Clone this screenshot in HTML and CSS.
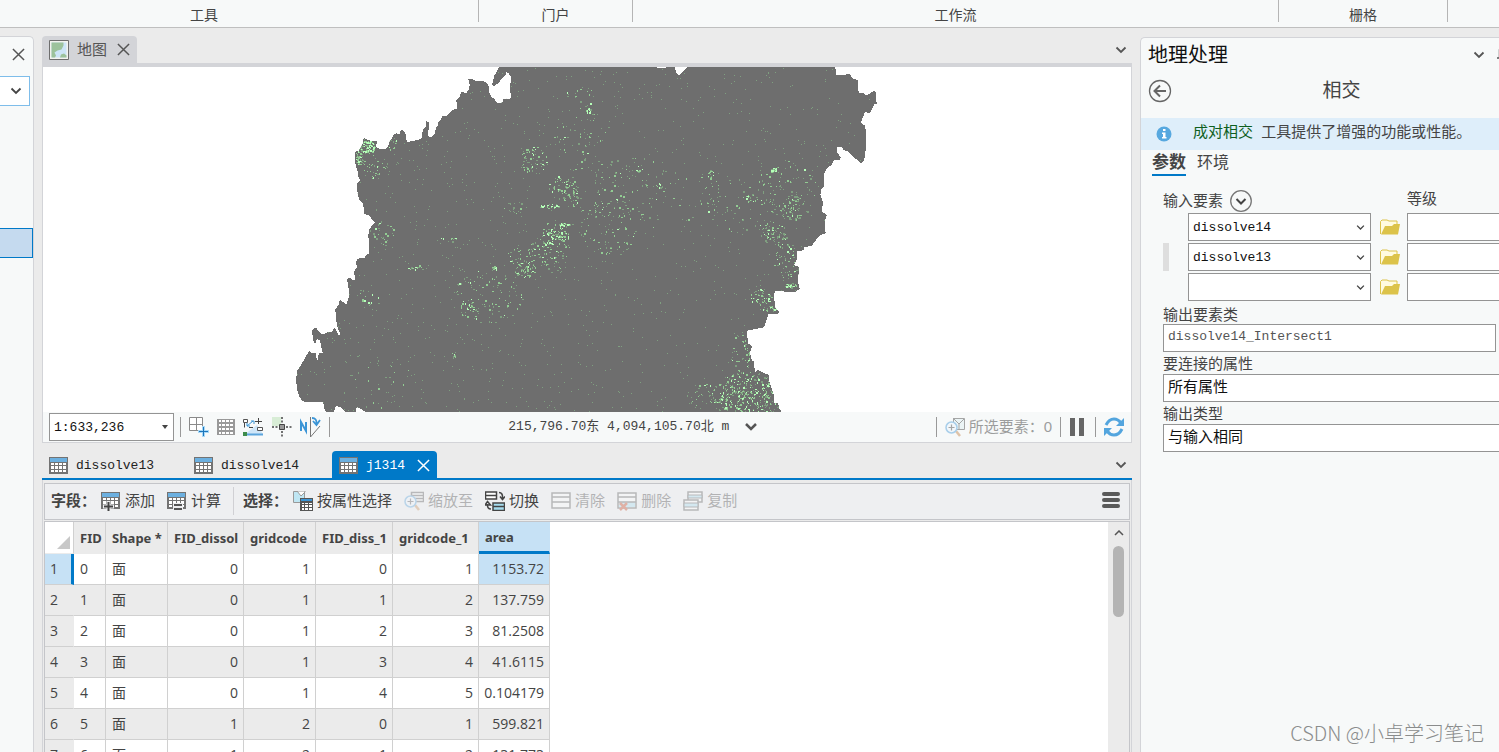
FILE: index.html
```
<!DOCTYPE html>
<html lang="zh-CN">

<head>
    <meta charset="UTF-8">
    <meta name="viewport" content="width=device-width, initial-scale=1.0">
    <title>地图</title>
    <link rel="stylesheet" href="styles.css">
</head>

<body>
    <!-- shared icons -->
    <svg class="sprite" aria-hidden="true">
        <symbol id="close" viewBox="0 0 14 14">
            <path d="M1 1l12 12M13 1L1 13" fill="none" stroke="currentColor" stroke-width="1.6" />
        </symbol>
        <symbol id="chevron" viewBox="0 0 12 12">
            <path d="M1.500 3.500L6 8l4.500-4.500" fill="none" stroke="currentColor" stroke-width="1.8" />
        </symbol>
        <symbol id="grid" viewBox="0 0 19 17">
            <path d="M0 0h19v17H0z" fill="#737373" />
            <path d="M1 1h17v4H1z" fill="#6cb0e0" />
            <path d="M2 6h3v2H2zM6 6h3v2H6zM10 6h3v2h-3zM14 6h3v2h-3zM2 9h3v3H2zM6 9h3v3H6zM10 9h3v3h-3zM14 9h3v3h-3zM2 13h3v2H2zM6 13h3v2H6zM10 13h3v2h-3zM14 13h3v2h-3z" fill="#fff" />
        </symbol>
        <symbol id="folder" viewBox="0 0 20 16">
            <path d="M.5 15V2.500L2 1h5l2 1h8v4" fill="#fffbe0" stroke="#dcc34a" />
            <path d="M1 15.500L5 7h7l2-2h6l-2 10.500z" fill="#dcc34a" />
        </symbol>
        <symbol id="magnifier" viewBox="0 0 20 20">
            <path d="M11 14l4 5" stroke="#c98f5a" stroke-width="2.500" />
            <circle cx="6.500" cy="10.500" r="5.500" fill="#eef6fd" stroke="#5ba5dc" stroke-width="1.500" />
            <path d="M3.500 10.500h6M6.500 7.500v6" stroke="#555" stroke-width="1.200" />
        </symbol>
    </svg>

    <header class="ribbon">
        <div class="group">工具</div>
        <div class="group">门户</div>
        <div class="group">工作流</div>
        <div class="group">栅格</div>
        <div class="group"></div>
    </header>

    <div class="workspace">
        <aside class="contents">
            <div class="contents-title">
                <button type="button" class="plain" aria-label="关闭"><svg width="13" height="13"><use href="#close" /></svg></button>
            </div>
            <button type="button" class="search-drop" aria-label="搜索选项"><svg width="12" height="12"><use href="#chevron" /></svg></button>
            <div class="layer-selected"></div>
        </aside>

        <main class="center">
            <div class="tabs map-tabs">
                <button type="button" class="tab current">
                    <svg width="20" height="20" viewBox="0 0 20 20">
                        <path d="M.5.500h19v19H.5z" fill="#f3f3ee" stroke="#6e6e6e" />
                        <path d="M2.500 2.500h15v15h-15z" fill="#cde5f7" />
                        <path d="M2.500 2.500h12v3l-2 4-4 1-3 2 1.500 3-1 2h-3.500zM17.500 17.500H11l1-3 3-1 2.500 2z" fill="#9cc29b" />
                    </svg>
                    <span>地图</span>
                    <svg width="13" height="13"><use href="#close" /></svg>
                </button>
                <button type="button" class="plain more" aria-label="更多视图"><svg width="12" height="12"><use href="#chevron" /></svg></button>
            </div>

            <section class="map-view">
                <!-- three units to a pixel -->
                <svg class="map" viewBox="129 201 3264 1035" preserveAspectRatio="xMidYMid slice" shape-rendering="crispEdges">
                    <defs>
                        <path id="west" transform="translate(870 180)" d="M628 20L620 35 612 48 609 66 605 72 609 79 620 73 628 66 636 55 646 46 650 36 656 40 662 50 663 65 659 80 661 95 663 112 657 117 640 116 638 126 630 130 618 127 612 115 606 112 601 104 597 95 596 80 590 68 580 63 555 62 548 57 534 56 538 66 539 76 536 88 529 101 518 96 512 98 511 108 501 118 498 122 502 135 500 146 488 150 478 159 470 167 458 168 452 181 445 185 444 198 437 205 435 222 425 230 417 232 413 222 417 205 416 185 408 184 407 200 400 207 396 222 394 237 380 240 368 243 350 246 349 230 344 215 336 210 329 213 329 222 318 220 310 224 306 235 298 246 293 262 285 267 268 266 259 262 260 244 248 243 234 240 224 235 218 240 219 250 212 262 206 272 196 275 194 290 197 315 203 335 206 355 212 361 200 373 202 395 207 417 219 430 223 461 238 467 246 478 254 488 243 500 236 512 235 530 238 555 237 580 227 585 225 594 202 596 199 605 200 622 192 635 196 658 188 660 180 653 171 658 175 675 177 710 173 722 170 733 160 727 150 719 146 733 136 748 138 775 141 795 146 810 152 825 146 827 138 808 132 804 126 815 112 817 96 824 89 818 80 805 72 804 67 812 68 838 75 852 81 838 88 840 94 857 95 870 98 878 86 880 84 901 80 900 78 880 64 878 57 872 52 882 42 900 22 932 18 960 22 990 28 1010 38 1024 60 1027 100 1026 101 1040 108 1056 132 1056 138 1038 150 1041 165 1056 198 1056 200 1041 212 1047 228 1056H990V20z" />
                        <path id="east" transform="translate(1800 180)" d="M0 20H170V23H198V20H225L228 38 238 46 250 32 262 22 270 20H706L708 44 725 44 750 43 757 55 773 60 776 97 790 100 800 106 808 102 822 92 828 96 827 115 831 130 822 134 815 150 808 161 795 154 790 168 783 188 796 198 798 235 799 250 795 290 790 305 782 311 770 298 758 290 745 275 730 270 726 260 712 260 712 278 722 292 720 299 700 302 695 315 680 325 672 342 672 380 664 388 661 405 668 425 667 455 680 465 674 485 677 520 660 525 648 540 635 557 613 562 610 571 592 573 592 595 582 615 596 620 595 670 599 687 585 696 560 697 545 692 525 692 522 705 525 742 538 757 530 763 505 762 500 780 492 802 442 812 443 850 456 858 450 880 455 900 463 905 464 937 473 930 488 937 507 945 508 965 515 985 522 1005 523 1030 534 1030 538 1045 545 1056H0z" />
                        <clipPath id="land">
                            <use href="#west" />
                            <use href="#east" />
                        </clipPath>
                    </defs>
                    <g fill="#6e6e6e">
                        <use href="#west" />
                        <use href="#east" />
                    </g>
                    <g clip-path="url(#land)">
                        <path id="patches-dim" fill="#7f9f80" />
                        <path id="patches-mid" fill="#92cc93" />
                        <path id="patches-bright" fill="#b5ffb8" />
                    </g>
                </svg>

                <div class="status">
                    <div class="status-part">
                        <label class="drop scale">
                            <select aria-label="比例尺">
                                <option>1:633,236</option>
                            </select>
                            <svg width="6" height="4" viewBox="0 0 6 4"><path d="M0 0h6L3 4z" fill="#444" /></svg>
                        </label>
                        <i class="sep"></i>
                        <button type="button" class="plain" aria-label="约束">
                            <svg width="20" height="20" viewBox="0 0 20 20">
                                <path d="M.5.500h13v13H.5zM7.500.500v13M.5 7.500h13" fill="#fff" stroke="#8a8a8a" />
                                <path d="M14.500 9v11M9 14.500h11" stroke="#a9d9f7" stroke-width="3" />
                                <path d="M14.500 10v9M10 14.500h9" stroke="#1b75bb" />
                            </svg>
                        </button>
                        <button type="button" class="plain" aria-label="格网">
                            <svg width="18" height="16" viewBox="0 0 18 16">
                                <path d="M0 0h18v16H0z" fill="#999" />
                                <path d="M2 1h2v2H2zM5 1h3v2H5zM9 1h3v2H9zM13 1h3v2h-3zM2 5h2v2H2zM5 5h3v2H5zM9 5h3v2H9zM13 5h3v2h-3zM2 9h2v2H2zM5 9h3v2H5zM9 9h3v2H9zM13 9h3v2h-3zM2 13h2v2H2zM5 13h3v2H5zM9 13h3v2H9zM13 13h3v2h-3z" fill="#fff" />
                            </svg>
                        </button>
                        <button type="button" class="plain" aria-label="捕捉">
                            <svg width="21" height="18" viewBox="0 0 21 18">
                                <path d="M2 16L14 7l6 9z" fill="#cfe6f8" />
                                <path d="M3 16.500h17" stroke="#5ba5dc" stroke-width="2" />
                                <path d="M1.500 5v4.500M6 9.500h4M12 3.500h7M15.500 0v6" fill="none" stroke="#444" />
                                <path d="M4 8l6-5M4 5v3h3M8 3h3v3" fill="none" stroke="#3b95d6" />
                                <path d="M.5 1.500h4v3h-4zM14.500 9.500h5v3h-5z" fill="#fff" stroke="#555" />
                                <path d="M0 14h4v4H0z" fill="#3f8d4b" />
                            </svg>
                        </button>
                        <button type="button" class="plain" aria-label="推断">
                            <svg width="20" height="20" viewBox="0 0 20 20">
                                <path d="M0 0h9v9H0z" fill="#d8edd6" />
                                <path d="M10 0v20M0 10h20" stroke="#444" stroke-width="1.500" stroke-dasharray="2 1.500" />
                                <path d="M7.500 7.500h5v5h-5z" fill="#999" stroke="#444" />
                            </svg>
                        </button>
                        <button type="button" class="plain" aria-label="旋转">
                            <svg width="21" height="20" viewBox="0 0 21 20">
                                <path d="M1 14V5l5 9V5" fill="none" stroke="#3b95d6" stroke-width="2" />
                                <path d="M10.500 0v20L20 9" fill="none" stroke="#777" />
                                <path d="M12 1q5 0 4.500 6M13 4l3.500 4L20 3" fill="none" stroke="#3b95d6" stroke-width="1.800" />
                            </svg>
                        </button>
                        <i class="sep"></i>
                    </div>
                    <div class="status-part coords">
                        <span>215,796.70东 4,094,105.70北 m</span>
                        <button type="button" class="plain" aria-label="坐标单位">
                            <svg width="12" height="8" viewBox="0 0 12 8"><path d="M1 1l5 5 5-5" fill="none" stroke="#555" stroke-width="2.500" /></svg>
                        </button>
                    </div>
                    <div class="status-part">
                        <i class="sep"></i>
                        <button type="button" class="plain picked" disabled>
                            <svg width="20" height="20" viewBox="0 0 20 20">
                                <path d="M8.500 1.500h11v11h-11z" fill="#e1f1f3" stroke="#555" />
                                <path d="M8 1l6 6 5-5M14 7v5" fill="none" stroke="#555" />
                                <use href="#magnifier" />
                            </svg>
                            <span>所选要素：0</span>
                        </button>
                        <i class="sep"></i>
                        <button type="button" class="plain" aria-label="暂停">
                            <svg width="18" height="18" viewBox="0 0 18 18"><path d="M1 0h5v18H1zM10 0h5v18h-5z" fill="#666" /></svg>
                        </button>
                        <i class="sep"></i>
                        <button type="button" class="plain" aria-label="刷新">
                            <svg width="20" height="20" viewBox="0 0 20 20">
                                <path d="M2 8q3-6 8-6 4 0 7 4M18 12q-3 6-8 6-4 0-7-4" fill="none" stroke="#53a5de" stroke-width="3" />
                                <path d="M20 1v8h-8zM0 19v-8h8z" fill="#53a5de" />
                            </svg>
                        </button>
                    </div>
                </div>
            </section>

            <div class="tabs table-tabs">
                <button type="button" class="tab"><svg width="19" height="17"><use href="#grid" /></svg><span>dissolve13</span></button>
                <button type="button" class="tab"><svg width="19" height="17"><use href="#grid" /></svg><span>dissolve14</span></button>
                <button type="button" class="tab current"><svg width="19" height="17"><use href="#grid" /></svg><span>j1314</span><svg width="13" height="13"><use href="#close" /></svg></button>
                <button type="button" class="plain more" aria-label="更多表"><svg width="12" height="12"><use href="#chevron" /></svg></button>
            </div>

            <section class="table-pane">
                <div class="toolbar">
                    <b>字段：</b>
                    <button type="button" class="tool">
                        <svg width="20" height="20" viewBox="0 0 20 20">
                            <use href="#grid" width="19" height="17" y="1" />
                            <path d="M7.500 10v10M2 15.500h11" stroke="#eeeff1" stroke-width="4" />
                            <path d="M7.500 11v9M3 15.500h9" stroke="#444" stroke-width="2" />
                        </svg>
                        <span>添加</span>
                    </button>
                    <button type="button" class="tool">
                        <svg width="20" height="20" viewBox="0 0 20 20">
                            <use href="#grid" width="19" height="17" y="1" />
                            <path d="M6 12h10v8H6z" fill="#eeeff1" />
                            <path d="M7 14h8M7 18h8" stroke="#555" stroke-width="2" />
                        </svg>
                        <span>计算</span>
                    </button>
                    <i class="sep"></i>
                    <b>选择：</b>
                    <button type="button" class="tool">
                        <svg width="20" height="20" viewBox="0 0 20 20">
                            <path d="M.5.500h11v11H.5z" fill="#bfe6f3" stroke="#999" />
                            <path d="M4 0l4 5 4-4V0z" fill="#fff" stroke="#999" />
                            <path d="M7 7h13v13H7z" fill="#555" />
                            <path d="M8 8h11v2H8z" fill="#3b95d6" />
                            <path d="M9 12h2v1H9zM12 12h3v1h-3zM16 12h3v1h-3zM9 14h2v2H9zM12 14h3v2h-3zM16 14h3v2h-3zM9 17h2v2H9zM12 17h3v2h-3zM16 17h3v2h-3z" fill="#fff" />
                        </svg>
                        <span>按属性选择</span>
                    </button>
                    <button type="button" class="tool" disabled>
                        <svg width="20" height="20" viewBox="0 0 20 20">
                            <path d="M7.500 1.500h12v9h-12zM8 4.500h12M8 7.500h12" fill="#fff" stroke="#555" stroke-width="1.500" />
                            <use href="#magnifier" />
                        </svg>
                        <span>缩放至</span>
                    </button>
                    <button type="button" class="tool">
                        <svg width="20" height="20" viewBox="0 0 20 20">
                            <path d="M.5 1h11v7H.5zM0 4.500h12" fill="#fff" stroke="#444" stroke-width="1.500" />
                            <path d="M8 12h11.500v7.500H8zM8 15.500h12" fill="#a6dcef" stroke="#444" stroke-width="1.500" />
                            <path d="M14 1.500q4 0 3.500 6M15 5.500l2.500 3 2.500-3M6 18q-4 0-3.500-5M0 14l2.500-3.500L5.500 14z" fill="none" stroke="#444" stroke-width="1.500" />
                        </svg>
                        <span>切换</span>
                    </button>
                    <button type="button" class="tool" disabled>
                        <svg width="20" height="20" viewBox="0 0 20 20">
                            <path d="M1 2h18v15H1zM1 6h18M1 11h18" fill="#fff" stroke="#555" stroke-width="1.500" />
                        </svg>
                        <span>清除</span>
                    </button>
                    <button type="button" class="tool" disabled>
                        <svg width="20" height="20" viewBox="0 0 20 20">
                            <path d="M1 2h18v15H1z" fill="#fff" stroke="#555" stroke-width="1.500" />
                            <path d="M2 11h16v5H2z" fill="#a6dcef" />
                            <path d="M1 6h18M1 11h18" stroke="#555" stroke-width="1.500" />
                            <path d="M3 12l7 7M10 12l-7 7" stroke="#c5401d" stroke-width="2.500" />
                        </svg>
                        <span>删除</span>
                    </button>
                    <button type="button" class="tool" disabled>
                        <svg width="20" height="20" viewBox="0 0 20 20">
                            <path d="M5 1h14v10H5z" fill="#fff" stroke="#555" stroke-width="1.500" />
                            <path d="M5 4h14v3H5z" fill="#a6dcef" stroke="#555" />
                            <path d="M1 9h14v10H1z" fill="#fff" stroke="#555" stroke-width="1.500" />
                            <path d="M1 12h14v4H1z" fill="#a6dcef" stroke="#555" />
                        </svg>
                        <span>复制</span>
                    </button>
                    <button type="button" class="plain menu" aria-label="菜单">
                        <svg width="18" height="17" viewBox="0 0 18 17"><path d="M2 2h14M2 8h14M2 14h14" stroke="#5a5a5a" stroke-width="4" stroke-linecap="round" /></svg>
                    </button>
                </div>

                <div class="table-box">
                    <div class="table-scroll">
                        <table>
                            <colgroup>
                                <col class="c-row">
                                <col class="c-fid">
                                <col class="c-shape">
                                <col class="c-dissol">
                                <col class="c-grid">
                                <col class="c-diss1">
                                <col class="c-grid1">
                                <col class="c-area">
                            </colgroup>
                            <thead>
                                <tr>
                                    <th class="corner"><svg width="13" height="13" viewBox="0 0 13 13"><path d="M13 0v13H0z" fill="#c8c8c8" /></svg></th>
                                    <th>FID</th>
                                    <th>Shape *</th>
                                    <th>FID_dissol</th>
                                    <th>gridcode</th>
                                    <th>FID_diss_1</th>
                                    <th>gridcode_1</th>
                                    <th class="sorted">area</th>
                                </tr>
                            </thead>
                            <tbody>
                                <tr class="active"><th>1</th><td>0</td><td>面</td><td>0</td><td>1</td><td>0</td><td>1</td><td>1153.72</td></tr>
                                <tr><th>2</th><td>1</td><td>面</td><td>0</td><td>1</td><td>1</td><td>2</td><td>137.759</td></tr>
                                <tr><th>3</th><td>2</td><td>面</td><td>0</td><td>1</td><td>2</td><td>3</td><td>81.2508</td></tr>
                                <tr><th>4</th><td>3</td><td>面</td><td>0</td><td>1</td><td>3</td><td>4</td><td>41.6115</td></tr>
                                <tr><th>5</th><td>4</td><td>面</td><td>0</td><td>1</td><td>4</td><td>5</td><td>0.104179</td></tr>
                                <tr><th>6</th><td>5</td><td>面</td><td>1</td><td>2</td><td>0</td><td>1</td><td>599.821</td></tr>
                                <tr><th>7</th><td>6</td><td>面</td><td>1</td><td>2</td><td>1</td><td>2</td><td>131.773</td></tr>
                            </tbody>
                        </table>
                    </div>
                    <div class="scrollbar">
                        <svg width="10" height="6" viewBox="0 0 10 6"><path d="M1 5l4-4 4 4" fill="none" stroke="#555" stroke-width="1.500" /></svg>
                        <div class="thumb"></div>
                    </div>
                </div>
            </section>
        </main>

        <aside class="geo">
            <div class="geo-title">
                <h2>地理处理</h2>
                <button type="button" class="plain" aria-label="窗格选项"><svg width="12" height="12"><use href="#chevron" /></svg></button>
                <button type="button" class="plain pin" aria-label="固定"><svg width="12" height="12" viewBox="0 0 12 12"><path d="M0 9h11M2.500 9V1h6v8M5.500 9v3" fill="none" stroke="#555" stroke-width="1.500" /></svg></button>
            </div>
            <div class="geo-tool">
                <button type="button" class="plain" aria-label="返回">
                    <svg width="24" height="24" viewBox="0 0 24 24">
                        <circle cx="12" cy="12" r="10.500" fill="none" stroke="#666" stroke-width="1.300" />
                        <path d="M18 12H7M12 6.500L6.500 12l5.500 5.500" fill="none" stroke="#666" stroke-width="2" />
                    </svg>
                </button>
                <h3>相交</h3>
            </div>
            <div class="notice">
                <svg width="16" height="16" viewBox="0 0 16 16">
                    <circle cx="8" cy="8" r="7.500" fill="#57a8df" />
                    <path d="M7 3h2.500v2H7zM6 6.500h3.500V11h1v1.500H6V11h1V8H6z" fill="#fff" />
                </svg>
                <p><a href="#pairwise">成对相交</a> 工具提供了增强的功能或性能。</p>
            </div>
            <nav class="geo-tabs">
                <a href="#params" class="current">参数</a>
                <a href="#env">环境</a>
            </nav>

            <form class="params">
                <div class="inputs-head">
                    <span>输入要素</span>
                    <button type="button" class="plain" aria-label="添加多个">
                        <svg width="22" height="22" viewBox="0 0 22 22">
                            <circle cx="11" cy="11" r="10.300" fill="none" stroke="#777" stroke-width="1.300" />
                            <path d="M6.500 9l4.500 4.500L15.500 9" fill="none" stroke="#444" stroke-width="2" />
                        </svg>
                    </button>
                    <span class="rank">等级</span>
                </div>
                <div class="input-row">
                    <i class="grip"></i>
                    <label class="drop"><select aria-label="输入要素 1"><option>dissolve14</option></select><svg width="9" height="9"><use href="#chevron" /></svg></label>
                    <button type="button" class="plain" aria-label="浏览"><svg width="20" height="16"><use href="#folder" /></svg></button>
                    <input type="text" aria-label="等级 1">
                </div>
                <div class="input-row">
                    <i class="grip shown"></i>
                    <label class="drop"><select aria-label="输入要素 2"><option>dissolve13</option></select><svg width="9" height="9"><use href="#chevron" /></svg></label>
                    <button type="button" class="plain" aria-label="浏览"><svg width="20" height="16"><use href="#folder" /></svg></button>
                    <input type="text" aria-label="等级 2">
                </div>
                <div class="input-row">
                    <i class="grip"></i>
                    <label class="drop"><select aria-label="输入要素 3"><option></option></select><svg width="9" height="9"><use href="#chevron" /></svg></label>
                    <button type="button" class="plain" aria-label="浏览"><svg width="20" height="16"><use href="#folder" /></svg></button>
                    <input type="text" aria-label="等级 3">
                </div>
                <label class="caption" for="out-class">输出要素类</label>
                <input type="text" id="out-class" value="dissolve14_Intersect1">
                <label class="caption" for="join-attr">要连接的属性</label>
                <select id="join-attr" class="wide"><option>所有属性</option></select>
                <label class="caption" for="out-type">输出类型</label>
                <select id="out-type" class="wide"><option>与输入相同</option></select>
            </form>
        </aside>
    </div>

    <div class="watermark">CSDN @小卓学习笔记</div>

    <script src="map.js"></script>
</body>

</html>
```
FILE: styles.css
```
* {
    box-sizing: border-box;
}

body {
    margin: 0;
    height: 100vh;
    display: flex;
    flex-direction: column;
    overflow: hidden;
    background: #ebebeb;
    color: #444;
    font-family: "Liberation Sans", "Noto Sans CJK SC", sans-serif;
    font-size: 15px;
    line-height: 20px;
}

h2, h3, p {
    margin: 0;
    font-weight: normal;
}

button, input, select {
    font: inherit;
    color: inherit;
    margin: 0;
}

svg {
    display: block;
    flex: none;
}

.sprite {
    position: absolute;
    width: 0;
    height: 0;
}

.plain {
    display: flex;
    align-items: center;
    padding: 0;
    border: none;
    background: none;
    color: #555;
}

.sep {
    flex: none;
    width: 1px;
    height: 20px;
    background: #999;
}

/* ribbon */
.ribbon {
    flex: none;
    display: grid;
    grid-template-columns: 479fr 154fr 646fr 169fr 51fr;
    height: 28px;
    background: #f7f9f9;
    border-bottom: 1px solid #bfbfbf;
    font-size: 14px;
}

.group {
    height: 22px;
    padding-top: 5px;
    border-right: 1px solid #b5b5b5;
    text-align: center;
}

.group:first-child {
    padding-right: 70px;
}

.group:last-child {
    border: none;
}

.workspace {
    flex: 1;
    min-height: 0;
    display: grid;
    grid-template-columns: 34px minmax(0, 1fr) 359px;
    grid-template-rows: minmax(0, 1fr);
    gap: 8px;
    padding-top: 8px;
}

/* contents pane */
.contents {
    background: #f7f9f9;
    border: 1px solid #d3d4d8;
    border-left: none;
    border-bottom: none;
    border-top-right-radius: 5px;
}

.contents-title {
    display: flex;
    justify-content: flex-end;
    align-items: center;
    height: 39px;
    padding: 0 8px 4px 0;
}

.search-drop {
    display: flex;
    align-items: center;
    justify-content: flex-end;
    width: 30px;
    height: 30px;
    padding: 0 7px;
    border: 1px solid #7ebdea;
    border-left: none;
    background: #fff;
}

.layer-selected {
    height: 30px;
    margin-top: 122px;
    background: #c5daef;
    border: 1px solid #0079c8;
    border-left: none;
}

/* tabs */
.center {
    display: flex;
    flex-direction: column;
    min-height: 0;
}

.tabs {
    flex: none;
    display: flex;
    align-items: stretch;
}

.tab {
    display: flex;
    align-items: center;
    gap: 8px;
    padding: 0 7px;
    border: none;
    border-radius: 4px 4px 0 0;
    background: none;
}

.more {
    margin-left: auto;
    padding-right: 5px;
}

.map-tabs {
    height: 31px;
    border-bottom: 4px solid #d3d4d8;
}

.map-tabs .current {
    background: #d3d4d8;
    color: #555;
}

.map-tabs .current span {
    margin-right: 2px;
}

.table-tabs {
    height: 29px;
    margin-top: 8px;
    border-bottom: 2px solid #0079c8;
    font-family: "Liberation Mono", "Noto Sans CJK SC", monospace;
    font-size: 13px;
}

.table-tabs .tab {
    min-width: 145px;
    padding-top: 2px;
    color: #222;
}

.table-tabs .current {
    min-width: 105px;
    background: #0079c8;
    color: #fff;
}

.table-tabs .current span {
    margin-right: 4px;
}

/* map */
.map-view {
    flex: none;
    border: 1px solid #d3d4d8;
    border-top: none;
}

.map {
    width: 100%;
    height: auto;
    aspect-ratio: 1088 / 345;
    background: #fff;
}

.status {
    display: flex;
    align-items: center;
    justify-content: space-between;
    height: 30px;
    padding: 0 7px 0 6px;
    background: #f7f9f9;
}

.status-part {
    display: flex;
    align-items: center;
    gap: 8px;
}

.scale {
    width: 125px;
    margin-right: -2px;
}

.coords {
    gap: 16px;
    font-family: "Liberation Mono", "Noto Sans CJK SC", monospace;
    font-size: 13px;
}

.picked {
    gap: 4px;
    color: #444;
    opacity: .5;
}

.drop {
    display: grid;
    align-items: center;
}

.drop select, .drop svg {
    grid-area: 1 / 1;
}

.drop svg {
    justify-self: end;
    margin-right: 6px;
    pointer-events: none;
}

select, input {
    appearance: none;
    width: 100%;
    height: 28px;
    padding: 0 4px;
    border: 1px solid #949494;
    border-radius: 0;
    background: #fff;
}

.drop select, .params input {
    font-family: "Liberation Mono", "Noto Sans CJK SC", monospace;
    font-size: 13px;
}

.drop select {
    padding-top: 2px;
    color: #111;
}

/* attribute table */
.table-pane {
    flex: 1;
    min-height: 0;
    display: flex;
    flex-direction: column;
    gap: 1px;
    padding: 3px 1px 0;
    border: 1px solid #d3d4d8;
    border-width: 0 1px;
}

.toolbar {
    flex: none;
    display: flex;
    align-items: center;
    gap: 12px;
    height: 37px;
    padding: 0 9px 2px 6px;
    background: #eeeff1;
    border: 1px solid #c4c5c9;
}

.toolbar b {
    margin-right: -7px;
}

.toolbar .sep {
    height: 28px;
    margin-right: -3px;
    background: #d0d0d4;
}

.tool {
    display: flex;
    align-items: center;
    gap: 4px;
    padding: 0;
    border: none;
    background: none;
}

.tool:disabled {
    opacity: .35;
}

.menu {
    margin-left: auto;
}

.table-box {
    flex: 1;
    min-height: 0;
    display: flex;
    background: #fff;
    border: 1px solid #c4c5c9;
    border-bottom: none;
}

.table-scroll {
    flex: 1;
    overflow: hidden;
}

table {
    width: 505px;
    table-layout: fixed;
    border-collapse: separate;
    border-spacing: 0;
    font-family: "Open Sans", "Noto Sans CJK SC", sans-serif;
    font-size: 14px;
}

.c-row { width: 29px; }
.c-fid { width: 32px; }
.c-shape { width: 62px; }
.c-dissol { width: 76px; }
.c-grid { width: 72px; }
.c-diss1 { width: 77px; }
.c-grid1 { width: 86px; }
.c-area { width: 71px; }

th, td {
    height: 31px;
    padding: 0 5px 0 6px;
    border-right: 1px solid #d0d0d0;
    border-bottom: 1px solid #d0d0d0;
    text-align: right;
    white-space: nowrap;
}

thead th {
    height: 32px;
    padding-right: 0;
    background: #ebebeb;
    border-bottom-color: #ebebeb;
    font-family: "Noto Sans", sans-serif;
    font-size: 13px;
    text-align: left;
}

tbody th {
    padding-left: 5px;
    background: #ebebeb;
    border-right-color: #ebebeb;
    font-weight: normal;
    text-align: left;
}

td:nth-child(2), td:nth-child(3) {
    text-align: left;
}

td:last-child {
    padding-left: 0;
}

tbody tr:nth-child(even) {
    background: #ebebeb;
}

thead .corner {
    padding: 9px 3px 0;
    background: #fff;
}

.corner svg {
    margin-left: auto;
}

thead .sorted {
    background: #c6e1f5;
    border-right-color: #c6e1f5;
    border-bottom: 3px solid #0079c8;
}

.active th {
    background: #c6e1f5;
    border-right: 3px solid #0079c8;
}

.active td:last-child {
    background: #c6e1f5;
}

.scrollbar {
    flex: none;
    display: flex;
    flex-direction: column;
    align-items: center;
    gap: 10px;
    width: 21px;
    padding-top: 8px;
    background: #ebebeb;
}

.thumb {
    width: 11px;
    height: 71px;
    border-radius: 6px;
    background: #b4b4b4;
}

/* geoprocessing pane */
.geo {
    margin-top: 1px;
    overflow: hidden;
    background: #f7f9f9;
    border: 1px solid #d3d4d8;
    border-right: none;
    border-bottom: none;
    border-top-left-radius: 5px;
}

.geo-title {
    display: flex;
    align-items: center;
    height: 34px;
    padding-left: 7px;
}

.geo-title h2 {
    flex: 1;
    color: #111;
    font-size: 20px;
}

.pin {
    margin: 0 -10px 0 12px;
}

.geo-tool {
    display: grid;
    grid-template-columns: 24px 1fr;
    align-items: center;
    height: 38px;
    padding: 0 0 0 7px;
}

.geo-tool h3 {
    padding-left: 12px;
    font-size: 19px;
    text-align: center;
}

.notice {
    display: flex;
    align-items: center;
    gap: 21px;
    height: 32px;
    margin-top: 8px;
    padding-left: 15px;
    background: #deeefa;
    white-space: nowrap;
}

.notice p {
    padding-bottom: 4px;
}

.notice a {
    margin-right: 4px;
    color: #0f5f1e;
    text-decoration: none;
}

.geo-tabs {
    display: flex;
    gap: 11px;
    padding: 2px 11px 0;
    font-size: 16px;
}

.geo-tabs a {
    height: 24px;
    padding-top: 1px;
    color: #444;
    text-decoration: none;
}

.geo-tabs .current {
    border-bottom: 2px solid #0079c8;
    font-size: 17px;
    font-weight: bold;
}

.params {
    padding: 13px 3px 0 22px;
}

.inputs-head {
    display: flex;
    align-items: center;
    gap: 7px;
    height: 24px;
    padding-bottom: 1px;
}

.rank {
    margin-left: auto;
    padding: 0 59px 4px 0;
}

.input-row {
    display: grid;
    grid-template-columns: 6px 183px 20px 100px;
    column-gap: 9px;
    align-items: center;
    margin-bottom: 2px;
}

.input-row .drop {
    margin-left: 10px;
    margin-right: -10px;
}

.input-row .plain {
    margin-left: 10px;
}

.input-row input {
    margin-left: 8px;
}

.grip.shown {
    height: 28px;
    background: #dedede;
}

.caption {
    display: block;
    height: 22px;
    padding-top: 2px;
}

.params #out-class {
    margin-top: -1px;
    padding-bottom: 3px;
    color: #555;
}

.params .wide {
    width: calc(100% + 10px);
    padding-bottom: 2px;
    color: #111;
}

.watermark {
    position: absolute;
    right: 15px;
    bottom: 8px;
    color: #8a8c8c;
    font-family: "Noto Sans CJK SC", sans-serif;
    font-size: 20px;
    font-weight: 300;
    line-height: 22px;
}
```
FILE: map.js
```
// scattered patches of the intersect layer: x, y, radius x, radius y, count, share of bright ones
var clusters = [
    [1102, 440, 22, 20, 110, 0.7],
    [1078, 470, 12, 24, 45, 0.4],
    [1130, 500, 50, 36, 36, 0.1],
    [1170, 430, 24, 20, 16, 0.1],
    [1600, 478, 42, 40, 55, 0.4],
    [1690, 565, 46, 40, 55, 0.2],
    [1720, 590, 14, 30, 16, 0.5],
    [1645, 618, 34, 6, 26, 0.7],
    [1697, 672, 22, 5, 24, 0.8],
    [1650, 705, 26, 24, 50, 0.7],
    [1690, 708, 16, 18, 28, 0.6],
    [1540, 620, 30, 24, 16, 0.1],
    [1610, 765, 90, 40, 90, 0.2],
    [1575, 808, 36, 22, 44, 0.3],
    [1660, 740, 50, 80, 50, 0.1],
    [1460, 890, 110, 80, 110, 0.2],
    [1415, 925, 14, 10, 12, 0.8],
    [1360, 1064, 5, 8, 8, 0.6],
    [1483, 805, 8, 8, 8, 0.8],
    [1765, 330, 7, 8, 14, 1],
    [1740, 370, 90, 110, 60, 0.1],
    [1345, 715, 24, 8, 8, 0.4],
    [1140, 700, 50, 36, 30, 0.1],
    [1250, 803, 30, 8, 14, 0.3],
    [1100, 895, 40, 30, 14, 0.3],
    [1820, 680, 90, 90, 80, 0.1],
    [1770, 560, 100, 90, 50, 0.1],
    [1920, 505, 16, 10, 8, 0.4],
    [1977, 555, 10, 8, 8, 0.5],
    [2130, 523, 10, 14, 18, 0.4],
    [2322, 508, 8, 7, 22, 0.8],
    [2370, 570, 90, 90, 70, 0.1],
    [2380, 620, 32, 40, 44, 0.3],
    [2250, 592, 24, 12, 16, 0.3],
    [2320, 700, 44, 34, 60, 0.3],
    [2360, 780, 40, 56, 60, 0.3],
    [2372, 856, 18, 6, 30, 0.9],
    [2282, 890, 32, 24, 44, 0.5],
    [2310, 925, 20, 8, 20, 0.4],
    [2220, 1060, 30, 60, 40, 0.2],
    [2245, 1155, 90, 40, 150, 0.5],
    [2240, 1210, 100, 40, 220, 0.5],
    [2110, 1185, 60, 36, 40, 0.2],
    [1950, 570, 190, 110, 70, 0.1],
    [2230, 600, 130, 100, 70, 0.1],
    [1120, 1140, 110, 90, 20, 0.05]
];

var seed = 1314;

function random() {
    seed = (seed * 16807) % 2147483647;
    return seed / 2147483647;
}

function cell(x, y, w, h) {
    x = Math.round(x / 3) * 3;
    y = Math.round(y / 3) * 3;
    return 'M' + x + ' ' + y + 'h' + w + 'v' + h + 'h-' + w + 'z';
}

var dim = '', mid = '', bright = '';

// single cells over the whole county
for (var i = 0; i < 1500; i++) {
    dim += cell(870 + random() * 1760, 201 + random() * 1035, 3, 3);
}

clusters.forEach(function(c) {
    for (var i = 0; i < c[4]; i++) {
        var angle = random() * Math.PI * 2;
        var far = Math.sqrt(random());
        var x = c[0] + Math.cos(angle) * far * c[2];
        var y = c[1] + Math.sin(angle) * far * c[3];
        var w = random() < 0.3 ? 6 : 3;
        var h = random() < 0.3 ? 6 : 3;
        if (random() < c[5] * 0.5) {
            bright += cell(x, y, w, h);
        } else if (random() < 0.5) {
            mid += cell(x, y, w, h);
        } else {
            dim += cell(x, y, w, h);
        }
    }
});

document.querySelector('#patches-dim').setAttribute('d', dim);
document.querySelector('#patches-mid').setAttribute('d', mid);
document.querySelector('#patches-bright').setAttribute('d', bright);
```
